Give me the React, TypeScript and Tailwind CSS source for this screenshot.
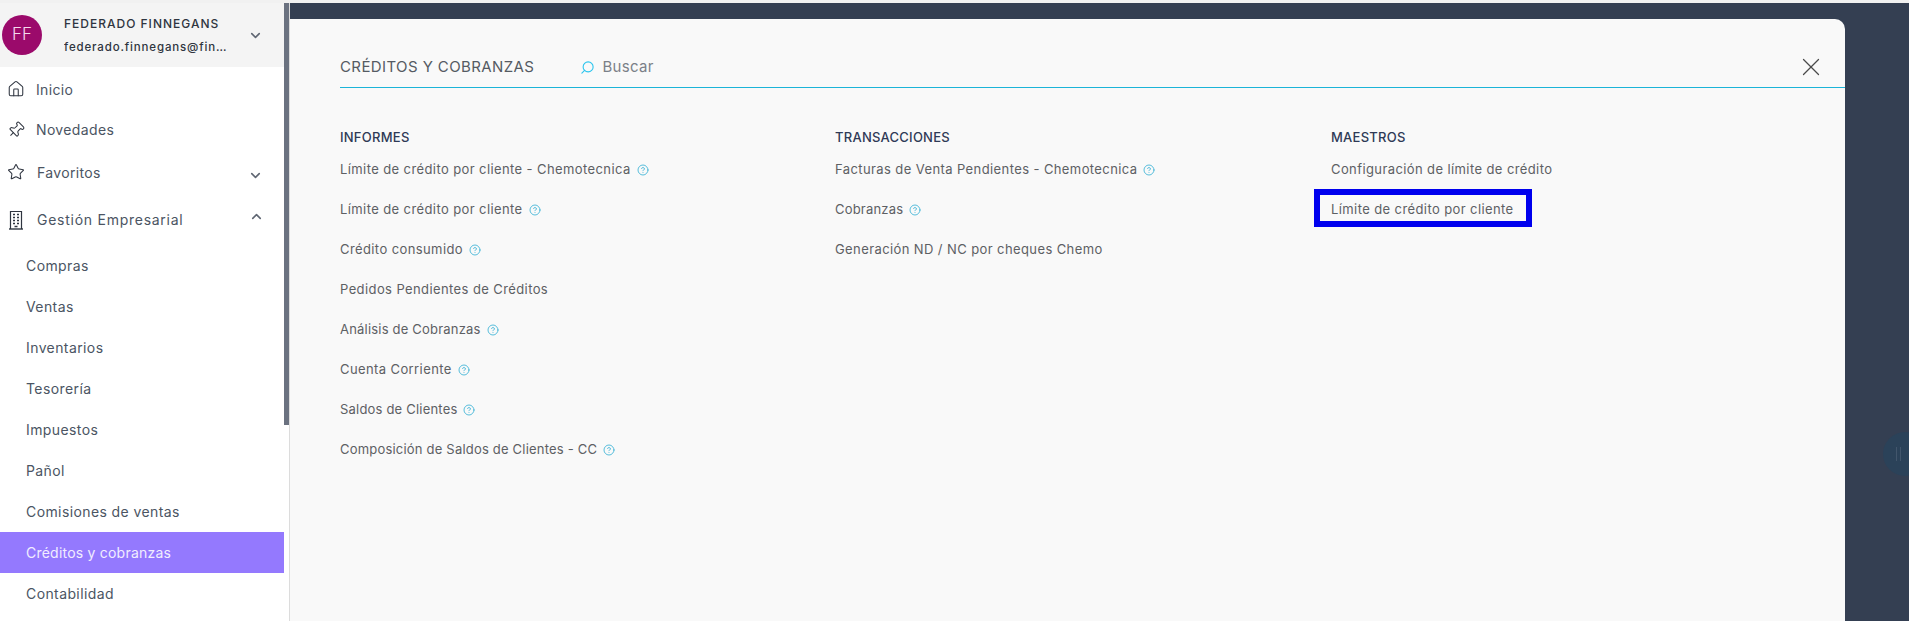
import { ChevronDown, ChevronUp, CircleHelp, House, Pin, Search, Star, X } from "lucide-react";

const SUBMENU = [
  "Compras",
  "Ventas",
  "Inventarios",
  "Tesorería",
  "Impuestos",
  "Pañol",
  "Comisiones de ventas",
  "Créditos y cobranzas",
  "Contabilidad",
];

const TIGHT = "tracking-[0.2px]";
const NORMAL = "tracking-[0.4px]";

const COLUMNS = [
  {
    title: "INFORMES",
    width: "w-[495px]",
    items: [
      { label: "Límite de crédito por cliente - Chemotecnica", help: true, track: NORMAL },
      { label: "Límite de crédito por cliente", help: true, track: NORMAL },
      { label: "Crédito consumido", help: true, track: NORMAL },
      { label: "Pedidos Pendientes de Créditos", help: false, track: NORMAL },
      { label: "Análisis de Cobranzas", help: true, track: TIGHT },
      { label: "Cuenta Corriente", help: true, track: NORMAL },
      { label: "Saldos de Clientes", help: true, track: TIGHT },
      { label: "Composición de Saldos de Clientes - CC", help: true, track: TIGHT },
    ],
  },
  {
    title: "TRANSACCIONES",
    width: "w-[496px]",
    items: [
      { label: "Facturas de Venta Pendientes - Chemotecnica", help: true, track: NORMAL },
      { label: "Cobranzas", help: true, track: TIGHT },
      { label: "Generación ND / NC por cheques Chemo", help: false, track: NORMAL },
    ],
  },
  {
    title: "MAESTROS",
    width: "w-[300px]",
    items: [
      { label: "Configuración de límite de crédito", help: false, track: NORMAL },
      { label: "Límite de crédito por cliente", help: false, track: NORMAL, boxed: true },
    ],
  },
];

function BuildingIcon() {
  return (
    <svg className="h-[20px] w-[16px] shrink-0 text-[#2f3540]" viewBox="0 0 16 20" fill="none" stroke="currentColor">
      <path d="M2.5 19V1.5h11V19" strokeWidth="1.2" />
      <path d="M1 19h14" strokeWidth="1.4" />
      <path
        d="M5 4.5h2M9 4.5h2M5 7.5h2M9 7.5h2M5 10.5h2M9 10.5h2M5 13.5h2M9 13.5h2M6.5 16.5h3"
        strokeWidth="1.5"
      />
    </svg>
  );
}

function NavRow({
  icon,
  label,
  height,
  textClass,
  chevron,
}: {
  icon: React.ReactNode;
  label: string;
  height: string;
  textClass: string;
  chevron?: React.ReactNode;
}) {
  return (
    <div className={`flex items-center pl-[8px] text-[14px] text-[#4b5563] ${height}`}>
      <span className="flex w-[16px] justify-center">{icon}</span>
      <span className={textClass}>{label}</span>
      {chevron}
    </div>
  );
}

export default function App() {
  return (
    <div className="flex h-[621px] w-[1909px] flex-col overflow-hidden bg-[#f1f1f1] font-['Inter',sans-serif]">
      <div className="mt-[3px] flex min-h-0 flex-1">
        {/* sidebar */}
        <aside className="flex w-[290px] shrink-0 border-r border-[#dcdcdc] bg-white">
          <div className="w-[284px] shrink-0">
            <div className="flex h-[64px] items-center bg-[#f4f4f4] pl-[2px]">
              <div className="flex h-[40px] w-[40px] items-center justify-center rounded-full bg-[#9b0a6b] text-[17px] font-light text-[#f5d9ec]">
                FF
              </div>
              <div className="ml-[22px] w-[170px]">
                <div className="pt-[1px] text-[12px] font-medium tracking-[1px] text-[#2f3540]">FEDERADO FINNEGANS</div>
                <div className="mt-[6px] truncate text-[11.5px] font-medium tracking-[0.85px] text-[#2f3540]">
                  federado.finnegans@fin…
                </div>
              </div>
              <ChevronDown className="ml-[14px] h-[15px] w-[15px] text-[#5f6672]" strokeWidth={2.5} />
            </div>
            <div className="mt-[2px]">
              <NavRow
                height="h-[40px]"
                textClass="ml-[12px] tracking-[0.35px]"
                label="Inicio"
                icon={<House className="h-[18px] w-[18px] shrink-0 text-[#2f3540]" strokeWidth={1.4} />}
              />
              <NavRow
                height="h-[41px]"
                textClass="ml-[12px] tracking-[0.35px]"
                label="Novedades"
                icon={<Pin className="h-[18px] w-[18px] shrink-0 rotate-45 text-[#2f3540]" strokeWidth={1.4} />}
              />
              <NavRow
                height="h-[44px]"
                textClass="ml-[13px] tracking-[0.35px]"
                label="Favoritos"
                icon={<Star className="h-[18px] w-[18px] shrink-0 text-[#2f3540]" strokeWidth={1.4} />}
                chevron={<ChevronDown className="ml-[147px] mt-[6px] h-[15px] w-[15px] text-[#5f6672]" strokeWidth={2.5} />}
              />
              <NavRow
                height="h-[51px]"
                textClass="ml-[13px] tracking-[0.74px]"
                label="Gestión Empresarial"
                icon={<BuildingIcon />}
                chevron={<ChevronUp className="ml-[66px] mb-[6px] h-[15px] w-[15px] text-[#5f6672]" strokeWidth={2.5} />}
              />
              {SUBMENU.map((name) => (
                <div
                  key={name}
                  className={
                    name === "Créditos y cobranzas"
                      ? "flex h-[41px] items-center bg-[#9479fe] pl-[26px] text-[14px] tracking-[0.22px] text-[#f1edff]"
                      : "flex h-[41px] items-center pl-[26px] text-[14px] tracking-[0.4px] text-[#4b5563]"
                  }
                >
                  {name}
                </div>
              ))}
            </div>
          </div>
          {/* scrollbar */}
          <div className="h-[422px] w-[5px] bg-[#6b7280]" />
        </aside>

        {/* main */}
        <main className="relative min-w-0 flex-1 bg-[#343f52] pt-[16px]">
          <div className="h-full w-[1555px] rounded-tr-[10px] bg-[#f9f9f9]">
            <div className="ml-[50px] flex h-[69px] items-center border-b border-[#1cb4d8] pt-[28px]">
              <span className="text-[15px] tracking-[0.4px] text-[#555b63]">CRÉDITOS Y COBRANZAS</span>
              <Search className="ml-[46px] h-[15px] w-[15px] -scale-x-100 text-[#2cc5ee]" strokeWidth={1.75} />
              <span className="ml-[7px] text-[15px] tracking-[0.3px] text-[#7b8088]">Buscar</span>
              <X className="ml-auto mr-[19px] h-[30px] w-[30px] text-[#4a4a4a]" strokeWidth={1} />
            </div>
            <div className="ml-[50px] mt-[40px] flex">
              {COLUMNS.map((col) => (
                <div key={col.title} className={col.width}>
                  <div className="flex h-[20px] items-center text-[13px] font-medium tracking-[0.25px] text-[#2f3a56]">
                    {col.title}
                  </div>
                  <div className="mt-[2px]">
                    {col.items.map((item) => (
                      <div key={item.label} className={`flex h-[40px] items-center text-[13px] text-[#5d6064] ${item.track}`}>
                        {item.boxed ? (
                          <span className="-ml-[17px] -mt-[4px] flex h-[38px] w-[218px] items-center border-[6px] border-[#0000ee] pl-[11px] pt-[3px]">
                            {item.label}
                          </span>
                        ) : (
                          item.label
                        )}
                        {item.help && <CircleHelp className="ml-[6px] h-[12px] w-[12px] text-[#3fb4d6]" strokeWidth={1.75} />}
                      </div>
                    ))}
                  </div>
                </div>
              ))}
            </div>
          </div>
          <div className="absolute left-[1593px] top-[429px] flex h-[44px] w-[44px] items-center gap-[3px] rounded-full bg-[#2b4259] pl-[13px]">
            <span className="h-[14px] w-[1px] bg-[#42566c]" />
            <span className="h-[14px] w-[1px] bg-[#42566c]" />
          </div>
        </main>
      </div>
    </div>
  );
}
